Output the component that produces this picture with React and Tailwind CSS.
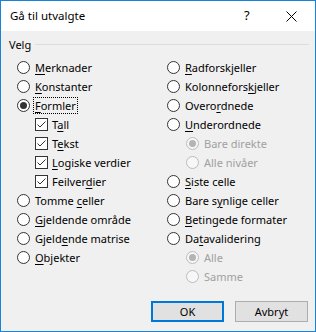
import React from "react";

const F = { fontFamily: '"Noto Sans", "Open Sans", sans-serif' };

function Radio({ checked, disabled }) {
  return (
    <span
      className={
        "relative inline-block w-[13px] h-[13px] rounded-full border shrink-0 " +
        (disabled ? "border-[#bcbcbc] bg-[#f7f7f7]" : "border-[#333333] bg-white")
      }
    >
      {checked && (
        <span
          className={
            "absolute left-[2px] top-[2px] w-[7px] h-[7px] rounded-full " +
            (disabled ? "bg-[#b4b4b4]" : "bg-[#333333]")
          }
        />
      )}
    </span>
  );
}

function Check() {
  return (
    <span className="relative inline-block w-[13px] h-[13px] border border-[#333333] bg-white shrink-0">
      <svg width="11" height="11" viewBox="0 0 11 11" className="absolute left-0 top-0">
        <polyline points="1.5,5.5 4,8 9.5,2.5" fill="none" stroke="#333333" strokeWidth="1" />
      </svg>
    </span>
  );
}

function Label({ text, u, disabled, focus }) {
  let content = text;
  if (u != null) {
    content = (
      <>
        {text.slice(0, u)}
        <span className="underline underline-offset-[2px] decoration-[1px]">{text[u]}</span>
        {text.slice(u + 1)}
      </>
    );
  }
  return (
    <span
      className={
        "leading-[15px] px-[1px] " +
        (disabled ? "text-[#a0a0a0] " : "text-black ") +
        (focus ? "outline outline-1 outline-dotted outline-black" : "")
      }
    >
      {content}
    </span>
  );
}

function RadioRow({ text, u, checked, disabled, focus, indent }) {
  return (
    <div className={"flex items-center h-[19px] gap-[4px] " + (indent ? "pl-[19px]" : "")}>
      <Radio checked={checked} disabled={disabled} />
      <Label text={text} u={u} disabled={disabled} focus={focus} />
    </div>
  );
}

function CheckRow({ text, u }) {
  return (
    <div className="flex items-center h-[19px] gap-[3px] pl-[18px]">
      <Check />
      <Label text={text} u={u} />
    </div>
  );
}

export default function App() {
  return (
    <div
      className="w-[316px] h-[332px] border border-[#1883d7] bg-[#f0f0f0] flex flex-col text-[11px] text-black"
      style={F}
    >
      <div className="h-[30px] bg-white flex items-center pl-[9px] shrink-0">
        <span className="text-[11.5px] flex-1">Gå til utvalgte</span>
        <span className="text-[13px] w-[10px] mr-[32px]">?</span>
        <svg width="11" height="11" viewBox="0 0 11 11" className="mr-[18px]">
          <path d="M0.5 0.5 L10.5 10.5 M10.5 0.5 L0.5 10.5" stroke="#000" strokeWidth="1" />
        </svg>
      </div>
      <div className="flex-1 flex flex-col pl-[8px] pr-[6px]">
        <div className="flex items-center h-[14px] mt-[7px]">
          <span className="leading-[14px]">Velg</span>
          <div className="flex-1 h-px bg-[#dcdcdc] ml-[4px] mt-[-2px]" />
        </div>
        <div className="grid grid-cols-[150px_1fr] pl-[8px] mt-[6px]">
          <div className="flex flex-col">
            <RadioRow text="Merknader" u={0} />
            <RadioRow text="Konstanter" u={0} />
            <RadioRow text="Formler" u={0} checked focus />
            <CheckRow text="Tall" u={1} />
            <CheckRow text="Tekst" u={1} />
            <CheckRow text="Logiske verdier" u={0} />
            <CheckRow text="Feilverdier" u={7} />
            <RadioRow text="Tomme celler" u={6} />
            <RadioRow text="Gjeldende område" u={0} />
            <RadioRow text="Gjeldende matrise" u={5} />
            <RadioRow text="Objekter" u={0} />
          </div>
          <div className="flex flex-col">
            <RadioRow text="Radforskjeller" u={0} />
            <RadioRow text="Kolonneforskjeller" u={11} />
            <RadioRow text="Overordnede" u={5} />
            <RadioRow text="Underordnede" u={0} />
            <RadioRow text="Bare direkte" checked disabled indent />
            <RadioRow text="Alle nivåer" disabled indent />
            <RadioRow text="Siste celle" u={0} />
            <RadioRow text="Bare synlige celler" u={6} />
            <RadioRow text="Betingede formater" u={0} />
            <RadioRow text="Datavalidering" u={2} />
            <RadioRow text="Alle" checked disabled indent />
            <RadioRow text="Samme" disabled indent />
          </div>
        </div>
        <div className="flex-1" />
        <div className="flex justify-end gap-[11px] mb-[9px] pr-[1px]">
          <button className="w-[73px] h-[21px] border-2 border-[#0078d7] bg-[#e1e1e1] text-[11px] leading-none">
            OK
          </button>
          <button className="w-[73px] h-[21px] border border-[#adadad] bg-[#e1e1e1] text-[11px] leading-none">
            Avbryt
          </button>
        </div>
      </div>
    </div>
  );
}
